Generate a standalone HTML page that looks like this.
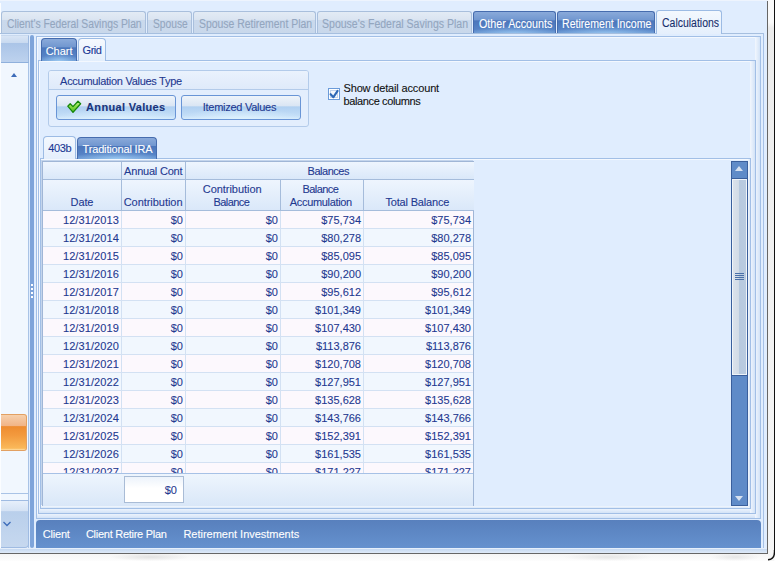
<!DOCTYPE html>
<html><head><meta charset="utf-8">
<style>
*{box-sizing:border-box;margin:0;padding:0}
html,body{width:775px;height:561px;overflow:hidden;background:#e0edfe;font-family:"Liberation Sans",sans-serif;font-size:11px;position:relative}
.a{position:absolute}
.t{position:absolute;white-space:nowrap;line-height:13px;font-size:11px;-webkit-text-stroke:0.1px currentColor}
.tab{position:absolute;top:11px;height:23px;border:1px solid #a9bfdc;border-bottom:none;border-radius:3px 3px 0 0;background:linear-gradient(#e3ebf5 0,#dae4f1 35%,#cad9ec 36%,#c9d8eb 100%)}
.tab.on{background:radial-gradient(ellipse 60% 35% at 50% 100%,rgba(170,215,250,0.75),rgba(170,215,250,0) 100%),linear-gradient(#8aaada 0,#7096cf 38%,#4b76bb 39%,#5683c6 80%,#6a98d3 100%);border-color:#466cae}
.tab.sel{top:10px;height:24px;background:linear-gradient(#f3f8fe,#e5effc);border-color:#9cbbe4}
.row{position:absolute;left:43px;width:430px;height:18px;border-bottom:1px solid #d3e1f3}
.ro{background:#fcf8fd}
.re{background:#f1f7fe}
.c{-webkit-text-stroke:0.1px currentColor;position:absolute;top:0;height:17px;border-right:1px solid #d3e1f3;text-align:right;line-height:13px;color:#1f3990;padding-top:3px;white-space:nowrap}
.c1{left:0;width:79px;padding-right:2px;letter-spacing:0.1px}
.c2{left:79px;width:64px;padding-right:2px}
.c3{left:143px;width:95px;padding-right:2px}
.c4{left:238px;width:83px;padding-right:2px}
.c5{left:321px;width:109px;border-right:none;padding-right:2px}
.hd{position:absolute;background:linear-gradient(#eef5fe,#dae8f9);border-right:1px solid #a5bcdb;border-bottom:1px solid #a5bcdb}
.ln{position:absolute;background:#a7c1e6}
</style></head><body>
<!-- top strip -->
<div class="a" style="left:0;top:0;width:775px;height:1px;background:#eef4fd"></div>
<div class="a" style="left:0;top:3px;width:1px;height:545px;background:#fbfdff"></div>

<!-- top tabs -->
<div class="tab" style="left:1px;width:145px"></div>
<div class="tab" style="left:147px;width:45px"></div>
<div class="tab" style="left:193px;width:123px"></div>
<div class="tab" style="left:317px;width:155px"></div>
<div class="tab on" style="left:473px;width:83px"></div>
<div class="tab on" style="left:557px;width:98px"></div>
<div class="t" style="left:6.7px;top:18px;font-size:12px;letter-spacing:0.0px;color:#93a6bf;transform:scaleX(0.8609);transform-origin:0 0;">Client&#39;s Federal Savings Plan</div><div class="t" style="left:152.5px;top:18px;font-size:12px;letter-spacing:0.0px;color:#93a6bf;transform:scaleX(0.8537);transform-origin:0 0;">Spouse</div><div class="t" style="left:198.5px;top:18px;font-size:12px;letter-spacing:0.0px;color:#93a6bf;transform:scaleX(0.8692);transform-origin:0 0;">Spouse Retirement Plan</div><div class="t" style="left:322.25px;top:18px;font-size:12px;letter-spacing:0.0px;color:#93a6bf;transform:scaleX(0.878);transform-origin:0 0;">Spouse&#39;s Federal Savings Plan</div>
<div class="t" style="left:478.5px;top:18px;font-size:12px;letter-spacing:0.0px;color:#fff;transform:scaleX(0.8933);transform-origin:0 0;">Other Accounts</div><div class="t" style="left:562.25px;top:18px;font-size:12px;letter-spacing:0.0px;color:#fff;transform:scaleX(0.8812);transform-origin:0 0;">Retirement Income</div>

<!-- page border from tab row -->
<div class="ln" style="left:0;top:33px;width:764px;height:1px;background:#a6bfdf"></div>
<div class="ln" style="left:763px;top:33px;width:1px;height:520px"></div>
<div class="tab sel" style="left:656px;width:66px"></div>
<div class="t" style="left:661.5px;top:17px;font-size:12px;letter-spacing:0.0px;color:#162f6c;transform:scaleX(0.8731);transform-origin:0 0;">Calculations</div>

<!-- left panel -->
<div class="a" style="left:1px;top:35px;width:28px;height:513px;background:#f1f7fe;border-right:1px solid #a9c3e6"></div>
<div class="a" style="left:1px;top:35px;width:28px;height:28px;background:linear-gradient(#d9e5f5 0,#c9daf0 25%,#aac4e7 26%,#bdd2ee 100%);border-right:1px solid #9db9e0;border-bottom:1px solid #8fb0dc;border-top:1px solid #c9d9ee"></div>
<div class="a" style="left:11px;top:72.5px;width:0;height:0;border-left:3.6px solid transparent;border-right:3.6px solid transparent;border-bottom:4.5px solid #3d6cb9"></div>
<div class="a" style="left:1px;top:414px;width:26px;height:37px;border:1px solid #e2a062;border-left:none;border-radius:0 3px 3px 0;background:linear-gradient(#f6d0ac 0,#f1b385 32%,#ee8c30 33%,#f39b3f 60%,#fab95a 95%,#ffe1a8 100%)"></div>
<div class="a" style="left:1px;top:493px;width:28px;height:1px;background:#a9c3e6"></div>
<div class="a" style="left:1px;top:500px;width:28px;height:48px;border-top:1px solid #9fbbe2;border-right:1px solid #9fbbe2;border-bottom:1px solid #9fbbe2;border-radius:0 0 4px 0;background:linear-gradient(#e6effb 0,#d4e2f4 22%,#b9cfeb 23%,#c6d8ef 100%)"></div>
<svg class="a" style="left:3px;top:521px" width="8" height="6"><path d="M0.5 1 L4 4.5 L7.5 1" fill="none" stroke="#3d6cb9" stroke-width="1.3"/></svg>

<!-- splitter -->
<div class="a" style="left:30px;top:35px;width:4px;height:513px;background:#7ea4da;border-radius:2px"></div>
<div class="a" style="left:31px;top:284px;width:2px;height:14px;background:repeating-linear-gradient(#fff 0,#fff 2px,transparent 2px,transparent 4px)"></div>

<!-- main nested borders -->
<div class="a" style="left:36px;top:36px;width:725px;height:483px;border:1px solid #a2bfe6;box-shadow:inset 1px 1px 0 #f4f8fe"></div>
<div class="a" style="left:37px;top:513px;width:723px;height:5px;background:linear-gradient(#f2f7fe,#d3e3f7)"></div>
<div class="a" style="left:755px;top:37px;width:5px;height:481px;background:linear-gradient(90deg,#f2f7fe,#d3e3f7)"></div>
<div class="a" style="left:38px;top:60px;width:718px;height:454px;border:1px solid #a2bfe6;box-shadow:inset 1px 1px 0 #f4f8fe"></div>
<div class="a" style="left:39px;top:508px;width:716px;height:5px;background:linear-gradient(#f2f7fe,#d3e3f7)"></div>
<div class="a" style="left:750px;top:61px;width:5px;height:452px;background:linear-gradient(90deg,#f2f7fe,#d3e3f7)"></div>

<!-- Chart/Grid tabs -->
<div class="tab on" style="left:41px;top:38px;width:36px;height:23px;border-radius:4px 4px 0 0"></div>
<div class="tab sel" style="left:78px;top:38px;width:28px;height:23px;border-radius:4px 4px 0 0;background:linear-gradient(#f6f9fe,#e3eefc)"></div>
<div class="t" style="left:45.7px;top:45px;font-size:11px;letter-spacing:-0.025px;color:#fff;">Chart</div><div class="t" style="left:82.6px;top:44px;font-size:11px;letter-spacing:-0.5px;color:#193893;">Grid</div>

<!-- group box -->
<div class="a" style="left:48px;top:70px;width:261px;height:57px;border:1px solid #b3cbea;border-radius:3px;background:#e3eefd"></div>
<div class="a" style="left:49px;top:71px;width:259px;height:19px;border-bottom:1px solid #b3cbea;background:linear-gradient(#eaf2fd,#dfeafa);border-radius:2px 2px 0 0"></div>
<div class="t" style="left:60.1px;top:75px;font-size:11px;letter-spacing:-0.287px;color:#1f3990;">Accumulation Values Type</div>
<div class="a" style="left:56px;top:95px;width:120px;height:25px;border:1px solid #6995d6;border-radius:3px;background:radial-gradient(ellipse 55% 45% at 50% 100%,rgba(225,244,255,0.8),rgba(225,244,255,0)),linear-gradient(#eff4fa 0,#d9e5f3 45%,#b0d0f1 46%,#c2ddf7 85%,#d6ebfc 100%)"></div>
<svg class="a" style="left:67px;top:100px" width="15" height="14" viewBox="0 0 15 14"><defs><linearGradient id="gck" x1="0" y1="0" x2="0" y2="1"><stop offset="0" stop-color="#c8f590"/><stop offset="0.5" stop-color="#86db45"/><stop offset="1" stop-color="#4fb81c"/></linearGradient></defs><path d="M0.8 6.2 L3.2 3.8 L6 6.6 L11 1.2 L13.6 3.7 L6 12.4 Z" fill="url(#gck)" stroke="#15870b" stroke-width="1.3" stroke-linejoin="round"/></svg>
<div class="t" style="left:86.1px;top:101px;font-size:11px;letter-spacing:0.325px;color:#1a347a;font-weight:bold;">Annual Values</div>
<div class="a" style="left:181px;top:95px;width:120px;height:25px;border:1px solid #6995d6;border-radius:3px;background:radial-gradient(ellipse 55% 45% at 50% 100%,rgba(225,244,255,0.8),rgba(225,244,255,0)),linear-gradient(#eff4fa 0,#d9e5f3 45%,#b0d0f1 46%,#c2ddf7 85%,#d6ebfc 100%)"></div>
<div class="t" style="left:202.75px;top:101px;font-size:11px;letter-spacing:-0.268px;color:#1f3990;">Itemized Values</div>

<!-- checkbox -->
<div class="a" style="left:328px;top:88px;width:12px;height:12px;border:1px solid #6b9bd9;background:#fff"></div>
<div class="a" style="left:330px;top:90px;width:8px;height:8px;border:1px solid #c3d5ee;background:#f4f8fd"></div>
<svg class="a" style="left:328px;top:88px" width="12" height="12"><path d="M2.6 6.2 L5.4 9.2 L9.6 2.8" fill="none" stroke="#2d68b6" stroke-width="2.1" stroke-linecap="round" stroke-linejoin="round"/></svg>
<div class="t" style="left:343.5px;top:82px;font-size:11px;letter-spacing:-0.156px;color:#111;">Show detail account</div><div class="t" style="left:343.5px;top:95px;font-size:11px;letter-spacing:-0.379px;color:#111;">balance columns</div>

<!-- 403b tabs -->
<div class="a" style="left:40px;top:158px;width:711px;height:351px;border:1px solid #a2bfe6;box-shadow:inset 1px 1px 0 #f4f8fe"></div>
<div class="a" style="left:41px;top:506px;width:709px;height:2px;background:linear-gradient(#f2f7fe,#d9e7f8)"></div>
<div class="a" style="left:748px;top:159px;width:2px;height:349px;background:linear-gradient(90deg,#f2f7fe,#d9e7f8)"></div>
<div class="tab sel" style="left:43px;top:136px;width:33px;height:23px;border-radius:4px 4px 0 0"></div>
<div class="tab on" style="left:77px;top:137px;width:80px;height:22px;border-radius:4px 4px 0 0"></div>
<div class="t" style="left:48.2px;top:142px;font-size:11px;letter-spacing:-0.367px;color:#193893;">403b</div><div class="t" style="left:82.6px;top:143px;font-size:11px;letter-spacing:-0.171px;color:#fff;">Traditional IRA</div>

<!-- grid -->
<div class="a" style="left:42px;top:161px;width:432px;height:345px;border:1px solid #a0b6d6;background:#e0edfe;box-shadow:-1px -1px 0 #c4d5ec"></div>
<div class="hd" style="left:43px;top:162px;width:79px;height:18px"></div>
<div class="hd" style="left:122px;top:162px;width:64px;height:18px"></div>
<div class="hd" style="left:186px;top:162px;width:288px;height:18px;border-right:none"></div>
<div class="hd" style="left:43px;top:180px;width:79px;height:31px"></div>
<div class="hd" style="left:122px;top:180px;width:64px;height:31px"></div>
<div class="hd" style="left:186px;top:180px;width:95px;height:31px"></div>
<div class="hd" style="left:281px;top:180px;width:83px;height:31px"></div>
<div class="hd" style="left:364px;top:180px;width:110px;height:31px;border-right:none"></div>
<div class="t" style="left:124.1px;top:165px;font-size:11px;letter-spacing:-0.21px;color:#1f3990;">Annual Cont</div><div class="t" style="left:307.6px;top:165px;font-size:11px;letter-spacing:-0.486px;color:#1f3990;">Balances</div>
<div class="t" style="left:70.6px;top:196px;font-size:11px;letter-spacing:-0.133px;color:#1f3990;">Date</div><div class="t" style="left:123.7px;top:196px;font-size:11px;letter-spacing:-0.045px;color:#1f3990;">Contribution</div><div class="t" style="left:202.8px;top:183px;font-size:11px;letter-spacing:-0.045px;color:#1f3990;">Contribution</div><div class="t" style="left:213.4px;top:196px;font-size:11px;letter-spacing:-0.55px;color:#1f3990;">Balance</div><div class="t" style="left:302.6px;top:183px;font-size:11px;letter-spacing:-0.6px;color:#1f3990;">Balance</div><div class="t" style="left:289.8px;top:196px;font-size:11px;letter-spacing:-0.327px;color:#1f3990;">Accumulation</div><div class="t" style="left:385.5px;top:196px;font-size:11px;letter-spacing:-0.183px;color:#1f3990;">Total Balance</div>
<div class="a" style="left:43px;top:211px;width:430px;height:262px;overflow:hidden">
<div class="a" style="left:-43px;top:-211px;width:775px;height:561px">
<div class="row ro" style="top:211px"><div class="c c1">12/31/2013</div><div class="c c2">$0</div><div class="c c3">$0</div><div class="c c4">$75,734</div><div class="c c5">$75,734</div></div>
<div class="row re" style="top:229px"><div class="c c1">12/31/2014</div><div class="c c2">$0</div><div class="c c3">$0</div><div class="c c4">$80,278</div><div class="c c5">$80,278</div></div>
<div class="row ro" style="top:247px"><div class="c c1">12/31/2015</div><div class="c c2">$0</div><div class="c c3">$0</div><div class="c c4">$85,095</div><div class="c c5">$85,095</div></div>
<div class="row re" style="top:265px"><div class="c c1">12/31/2016</div><div class="c c2">$0</div><div class="c c3">$0</div><div class="c c4">$90,200</div><div class="c c5">$90,200</div></div>
<div class="row ro" style="top:283px"><div class="c c1">12/31/2017</div><div class="c c2">$0</div><div class="c c3">$0</div><div class="c c4">$95,612</div><div class="c c5">$95,612</div></div>
<div class="row re" style="top:301px"><div class="c c1">12/31/2018</div><div class="c c2">$0</div><div class="c c3">$0</div><div class="c c4">$101,349</div><div class="c c5">$101,349</div></div>
<div class="row ro" style="top:319px"><div class="c c1">12/31/2019</div><div class="c c2">$0</div><div class="c c3">$0</div><div class="c c4">$107,430</div><div class="c c5">$107,430</div></div>
<div class="row re" style="top:337px"><div class="c c1">12/31/2020</div><div class="c c2">$0</div><div class="c c3">$0</div><div class="c c4">$113,876</div><div class="c c5">$113,876</div></div>
<div class="row ro" style="top:355px"><div class="c c1">12/31/2021</div><div class="c c2">$0</div><div class="c c3">$0</div><div class="c c4">$120,708</div><div class="c c5">$120,708</div></div>
<div class="row re" style="top:373px"><div class="c c1">12/31/2022</div><div class="c c2">$0</div><div class="c c3">$0</div><div class="c c4">$127,951</div><div class="c c5">$127,951</div></div>
<div class="row ro" style="top:391px"><div class="c c1">12/31/2023</div><div class="c c2">$0</div><div class="c c3">$0</div><div class="c c4">$135,628</div><div class="c c5">$135,628</div></div>
<div class="row re" style="top:409px"><div class="c c1">12/31/2024</div><div class="c c2">$0</div><div class="c c3">$0</div><div class="c c4">$143,766</div><div class="c c5">$143,766</div></div>
<div class="row ro" style="top:427px"><div class="c c1">12/31/2025</div><div class="c c2">$0</div><div class="c c3">$0</div><div class="c c4">$152,391</div><div class="c c5">$152,391</div></div>
<div class="row re" style="top:445px"><div class="c c1">12/31/2026</div><div class="c c2">$0</div><div class="c c3">$0</div><div class="c c4">$161,535</div><div class="c c5">$161,535</div></div>
<div class="row ro" style="top:463px"><div class="c c1">12/31/2027</div><div class="c c2">$0</div><div class="c c3">$0</div><div class="c c4">$171,227</div><div class="c c5">$171,227</div></div>
</div></div>
<div class="a" style="left:43px;top:473px;width:430px;height:33px;border-top:1px solid #a7c1e6;background:linear-gradient(#eef5fd,#d9e7f8)"></div>
<div class="a" style="left:124px;top:476px;width:60px;height:27px;border:1px solid #a9bcd6;background:linear-gradient(#edf3fb,#fff 45%,#fff)"></div>
<div class="t" style="left:124px;top:484px;width:53px;text-align:right;color:#1f3990">$0</div>

<!-- scrollbar -->
<div class="a" style="left:731px;top:161px;width:17px;height:345px;background:#5f8bc8;border:1px solid #3a5f9c"></div>
<div class="a" style="left:732px;top:178px;width:15px;height:1px;background:#3a5f9c"></div>
<div class="a" style="left:735px;top:166px;width:0;height:0;border-left:4.5px solid transparent;border-right:4.5px solid transparent;border-bottom:5px solid #d6e1f0"></div>
<div class="a" style="left:732px;top:179px;width:15px;height:196px;border:1px solid #f0f4f8;background:linear-gradient(90deg,#dbe2eb 0,#d2dbe6 45%,#b7c9df 46%,#b9cbe0 100%)"></div>
<div class="a" style="left:731px;top:375px;width:17px;height:1px;background:#3a5f9c"></div>
<div class="a" style="left:735px;top:273px;width:9px;height:7px;background:repeating-linear-gradient(#4a70a8 0,#4a70a8 1px,transparent 1px,transparent 2px)"></div>
<div class="a" style="left:735px;top:496px;width:0;height:0;border-left:4.5px solid transparent;border-right:4.5px solid transparent;border-top:5px solid #d6e1f0"></div>

<!-- nav bar -->
<div class="a" style="left:36px;top:520px;width:725px;height:28px;border-radius:4px 4px 0 0;background:linear-gradient(#5880bd,#6591ce)"></div>
<div class="t" style="left:42.8px;top:528px;font-size:11px;letter-spacing:-0.2px;color:#fff;">Client</div><div class="t" style="left:85.9px;top:528px;font-size:11px;letter-spacing:-0.265px;color:#fff;">Client Retire Plan</div><div class="t" style="left:183.4px;top:528px;font-size:11px;letter-spacing:-0.014px;color:#fff;">Retirement Investments</div>

<!-- bottom frame -->
<div class="a" style="left:0;top:548px;width:767px;height:5px;background:linear-gradient(#f4f8fe 0,#c9dbf2 30%,#dfeaf8 100%)"></div>
<div class="a" style="left:0;top:553px;width:768px;height:1px;background:#666"></div>
<div class="a" style="left:0;top:554px;width:775px;height:7px;background:radial-gradient(ellipse 40px 4px at 150px 3px,#e2e2e2,rgba(240,240,240,0)),radial-gradient(ellipse 45px 4px at 608px 3px,#e6e6e6,rgba(240,240,240,0)),radial-gradient(ellipse 25px 4px at 735px 3px,#e6e6e6,rgba(240,240,240,0)),linear-gradient(#f6f6f6,#fdfdfd)"></div>
<div class="a" style="left:767px;top:1px;width:1px;height:553px;background:#666"></div>
<div class="a" style="left:768px;top:0;width:6px;height:561px;background:linear-gradient(#fafafa 0,#fafafa 4%,#ececec 5%,#f6f6f6 100%)"></div>
<div class="a" style="left:774px;top:0;width:1px;height:550px;background:#111"></div>
<svg class="a" style="left:760px;top:540px" width="15" height="21"><path d="M14.5 10 L14.5 12 Q14.5 19.5 8 19.8" fill="none" stroke="#111" stroke-width="1.4"/></svg>
</body></html>
